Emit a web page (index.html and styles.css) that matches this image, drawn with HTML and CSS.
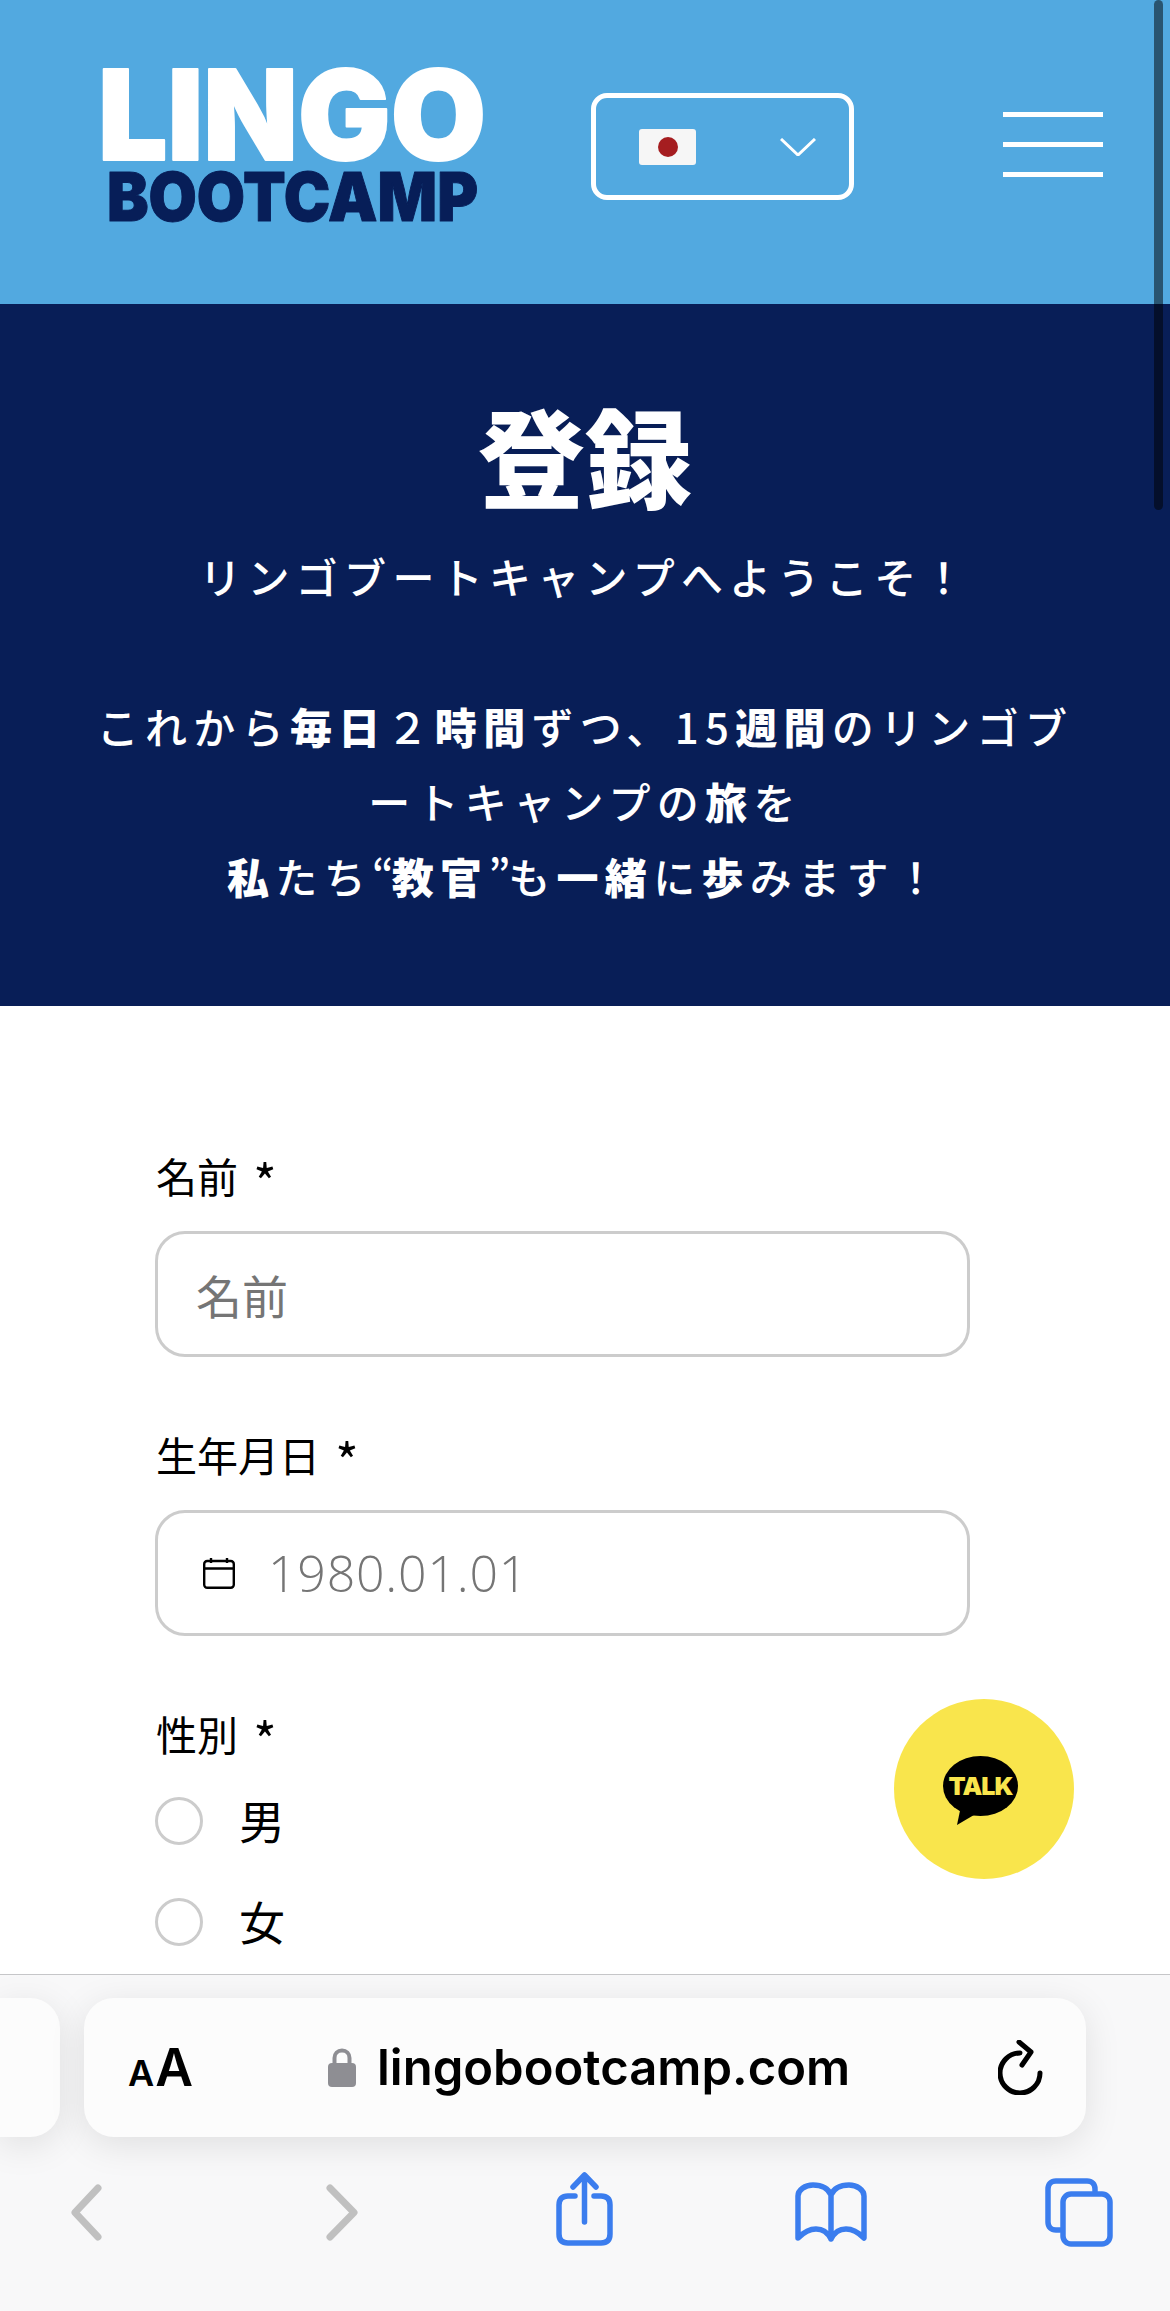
FILE: index.html
```html
<!DOCTYPE html>
<html lang="ja">
<head>
    <meta charset="UTF-8">
    <meta name="viewport" content="width=device-width, initial-scale=1.0">
    <title>登録 | Lingo Bootcamp</title>
    <link rel="stylesheet" href="styles.css">
</head>
<body>
    <header class="site-header">
        <svg class="logo" viewBox="0 0 384 160" role="img" aria-label="Lingo Bootcamp">
            <text class="logo-top" x="-4" y="94" textLength="388" lengthAdjust="spacingAndGlyphs">LINGO</text>
            <text class="logo-bottom" x="5" y="155" textLength="371" lengthAdjust="spacingAndGlyphs">BOOTCAMP</text>
        </svg>
        <div class="lang-select">
            <span class="flag"><span class="flag-dot"></span></span>
            <svg class="lang-chevron" viewBox="0 0 36 18"><polyline points="1,1 18,17 35,1"/></svg>
        </div>
        <div class="hamburger"><span></span><span></span><span></span></div>
    </header>

    <section class="hero">
        <h1>登録</h1>
        <p>リンゴブートキャンプへようこそ！<br><br>これから<b>毎日</b>２<b>時間</b>ずつ、15<b>週間</b>のリンゴブ<br>ートキャンプの<b>旅</b>を<br><b>私</b>たち<span class="quote">“</span><b>教官</b><span class="quote">”</span>も<b>一緒</b>に<b>歩</b>みます！</p>
    </section>

    <main class="form-area">
        <div class="field">
            <label class="field-label" for="name">名前 <span class="star">*</span></label>
            <div class="input-box"><input id="name" type="text" placeholder="名前"></div>
        </div>
        <div class="field">
            <label class="field-label" for="birth">生年月日 <span class="star">*</span></label>
            <div class="input-box date-box">
                <svg class="calendar" viewBox="0 0 32 32">
                    <rect x="1.2" y="4" width="29.6" height="26.8" rx="3"/>
                    <path d="M1.2 11.5H30.8M8 1V6M24 1V6"/>
                </svg>
                <input id="birth" type="text" placeholder="1980.01.01">
            </div>
        </div>
        <div class="field-label gender-label">性別 <span class="star">*</span></div>
        <div class="radio-list">
            <label class="radio-row"><span class="radio"></span><span class="radio-text">男</span></label>
            <label class="radio-row"><span class="radio"></span><span class="radio-text">女</span></label>
        </div>
    </main>

    <a class="kakao" href="#">
        <svg viewBox="0 0 75 69">
            <ellipse cx="37.5" cy="30" rx="37.5" ry="30"/>
            <polygon points="18,50 14,69 36,56"/>
            <text x="37.5" y="39" text-anchor="middle">TALK</text>
        </svg>
    </a>

    <div class="scrollbar"></div>

    <footer class="browser-bar">
        <div class="pill-row">
            <div class="pill-stub"></div>
            <div class="url-pill">
                <div class="text-size"><span class="a-small">A</span><span class="a-big">A</span></div>
                <svg class="lock" viewBox="0 0 28 39">
                    <path class="lock-hoop" d="M6.5 17V10C6.5 5.5 9.5 2.5 14 2.5S21.500 5.500 21.500 10V17"/>
                    <rect x="0" y="15" width="28" height="24" rx="4"/>
                </svg>
                <span class="url">lingobootcamp.com</span>
                <svg class="reload" viewBox="0 0 45 55">
                    <path d="M42 33A20 20 0 1 1 22 13"/>
                    <path d="M21 2L33 12L24 25"/>
                </svg>
            </div>
        </div>
        <nav class="toolbar">
            <svg class="tool tool-back" viewBox="0 0 31 57"><polyline points="27,4 4,28.500 27,53"/></svg>
            <svg class="tool tool-forward" viewBox="0 0 32 57"><polyline points="4,4 28,28.500 4,53"/></svg>
            <svg class="tool tool-share" viewBox="0 0 57 74">
                <path d="M19 24H12C6 24 3 27 3 33V62C3 68 6 71 12 71H45C51 71 54 68 54 62V33C54 27 51 24 45 24H38"/>
                <path d="M28.500 50V4M17 15L28.500 3L40 15"/>
            </svg>
            <svg class="tool tool-book" viewBox="0 0 72 61">
                <path d="M36 13C33 6 26 3 18 3C10 3 3 8 3 14V56C9 50 15 47 21 47C28 47 33 51 36 57C39 51 44 47 51 47C57 47 63 50 69 56V14C69 8 62 3 54 3C46 3 39 6 36 13V57"/>
            </svg>
            <svg class="tool tool-tabs" viewBox="0 0 68 69">
                <path d="M50 13V11C50 6 47 3 42 3H11C6 3 3 6 3 11V44C3 49 6 52 11 52H15"/>
                <rect x="18" y="16" width="47" height="50" rx="8"/>
            </svg>
        </nav>
    </footer>
</body>
</html>
```

FILE: styles.css
```css
* {
    box-sizing: border-box;
}

body {
    margin: 0;
    height: 2311px;
    overflow: hidden;
    position: relative;
    display: flex;
    flex-direction: column;
    background-color: white;
    font-family: 'Noto Sans CJK JP', 'Noto Sans', sans-serif;
    color: black;
}

/* site header */
.site-header {
    height: 304px;
    flex: none;
    background-color: #52a9e0;
    display: flex;
    align-items: flex-start;
    padding: 66px 67px 0 102px;
}

.logo {
    width: 384px;
    height: 160px;
    flex: none;
    overflow: visible;
}

.logo text {
    font-family: Inter, 'Liberation Sans', sans-serif;
    font-weight: 900;
    stroke-linejoin: round;
}

.logo-top {
    font-size: 125px;
    fill: white;
    stroke: white;
    stroke-width: 2px;
}

.logo-bottom {
    font-size: 68px;
    fill: #071e58;
    stroke: #071e58;
    stroke-width: 1px;
}

.lang-select {
    width: 263px;
    height: 107px;
    flex: none;
    margin: 27px 0 0 105px;
    border: 5px solid white;
    border-radius: 16px;
    display: flex;
    align-items: center;
    padding: 0 33px 0 43px;
    justify-content: space-between;
}

.flag {
    width: 57px;
    height: 36px;
    background-color: #f6f6f6;
    border-radius: 3px;
    display: flex;
    align-items: center;
    justify-content: center;
}

.flag-dot {
    width: 20px;
    height: 20px;
    border-radius: 50%;
    background-color: #a51d20;
}

.lang-chevron {
    width: 36px;
    height: 18px;
    fill: none;
    stroke: white;
    stroke-width: 3px;
}

.hamburger {
    width: 100px;
    margin: 46px 0 0 auto;
    display: flex;
    flex-direction: column;
    gap: 25px;
}

.hamburger span {
    height: 5px;
    background-color: white;
}

/* hero */
.hero {
    height: 702px;
    flex: none;
    background-color: #081e57;
    color: white;
    text-align: center;
    padding-top: 90px;
}

.hero h1 {
    margin: 0 0 24px;
    font-size: 107px;
    line-height: 120px;
    font-weight: 900;
}

.hero p {
    margin: 0;
    font-size: 42px;
    line-height: 75px;
    letter-spacing: 6.300px;
    font-weight: 500;
}

.hero b {
    font-weight: 900;
}

.hero .quote {
    letter-spacing: -2px;
}

/* form */
.form-area {
    flex: 1;
    padding: 139px 200px 0 155px;
    overflow: hidden;
}

.field {
    margin-bottom: 67px;
}

.field-label {
    display: block;
    font-size: 41px;
    line-height: 60px;
    margin-bottom: 26px;
    padding-left: 1px;
}

.star {
    margin-left: 6px;
    font-size: 50px;
    line-height: 0;
    vertical-align: -9px;
}

.input-box {
    height: 126px;
    border: 3px solid #cccccc;
    border-radius: 30px;
    display: flex;
    align-items: center;
    padding-left: 38px;
}

.input-box input {
    flex: 1;
    min-width: 0;
    border: none;
    outline: none;
    padding: 0;
    background: none;
    font-family: 'Noto Sans CJK JP', sans-serif;
    font-size: 46px;
}

.input-box input::placeholder {
    color: #757575;
    opacity: 1;
}

.date-box {
    padding-left: 45px;
}

.date-box input {
    margin-left: 33px;
    font-family: 'Open Sans', sans-serif;
    font-weight: 300;
    font-size: 50px;
    letter-spacing: 0.800px;
}

.calendar {
    width: 32px;
    height: 32px;
    flex: none;
    fill: none;
    stroke: black;
    stroke-width: 2.400px;
}

.gender-label {
    margin-bottom: 0;
}

.radio-list {
    margin-top: 34px;
    display: flex;
    flex-direction: column;
    gap: 53px;
}

.radio-row {
    display: flex;
    align-items: center;
    height: 48px;
    font-size: 46px;
    gap: 36px;
}

.radio-text {
    margin-bottom: 4px;
}

.radio {
    width: 48px;
    height: 48px;
    border: 3px solid #cccccc;
    border-radius: 50%;
}

/* floating things */
.kakao {
    position: absolute;
    left: 894px;
    top: 1699px;
    width: 180px;
    height: 180px;
    border-radius: 50%;
    background-color: #f9e54c;
    display: flex;
    align-items: center;
    justify-content: center;
}

.kakao svg {
    width: 75px;
    height: 69px;
    margin: 2px 0 0 -8px;
}

.kakao ellipse,
.kakao polygon {
    fill: black;
}

.kakao text {
    font-family: Inter, sans-serif;
    font-size: 25px;
    font-weight: 900;
    fill: #f9e54c;
    letter-spacing: -1px;
}

.scrollbar {
    position: absolute;
    right: 7px;
    top: 0;
    width: 9px;
    height: 510px;
    border-radius: 5px;
    background-color: rgba(0, 0, 0, 0.5);
}

/* safari bar */
.browser-bar {
    height: 337px;
    flex: none;
    background-color: #f8f8f9;
    border-top: 1px solid #c6c6c8;
    display: flex;
    flex-direction: column;
}

.pill-row {
    display: flex;
    gap: 24px;
    margin-top: 23px;
    height: 139px;
    flex: none;
}

.pill-stub,
.url-pill {
    background-color: #fcfcfc;
    box-shadow: 0 8px 36px rgba(0, 0, 0, 0.1);
}

.pill-stub {
    width: 60px;
    border-radius: 0 30px 30px 0;
}

.url-pill {
    width: 1002px;
    border-radius: 30px;
    display: flex;
    align-items: center;
    padding: 0 43px 0 44px;
}

.text-size {
    width: 200px;
    display: flex;
    align-items: baseline;
    font-family: Inter, sans-serif;
    font-weight: 600;
    line-height: 1;
    flex: none;
}

.a-small {
    font-size: 36px;
    margin-right: 1px;
}

.a-big {
    font-size: 52px;
}

.lock {
    width: 28px;
    height: 39px;
    flex: none;
    fill: #8e8e93;
}

.lock-hoop {
    fill: none;
    stroke: #8e8e93;
    stroke-width: 4px;
}

.url {
    margin-left: 21px;
    font-family: Inter, sans-serif;
    font-weight: 600;
    font-size: 49px;
    line-height: 1;
}

.reload {
    margin-left: auto;
    width: 45px;
    height: 55px;
    flex: none;
    fill: none;
    stroke: black;
    stroke-width: 5px;
    stroke-linecap: round;
    stroke-linejoin: round;
}

.toolbar {
    display: flex;
    align-items: center;
    height: 150px;
    padding-left: 71px;
}

.tool {
    flex: none;
    fill: none;
    stroke: #3b7dee;
    stroke-width: 5.500px;
    stroke-linecap: round;
    stroke-linejoin: round;
}

.tool-back,
.tool-forward {
    height: 57px;
    stroke: #c0c0c0;
    stroke-width: 7px;
}

.tool-back {
    width: 31px;
}

.tool-forward {
    width: 32px;
    margin-left: 224px;
}

.tool-share {
    width: 57px;
    height: 74px;
    margin: -6px 0 0 198px;
}

.tool-book {
    width: 72px;
    height: 61px;
    margin-left: 182px;
}

.tool-tabs {
    width: 68px;
    height: 69px;
    margin-left: 178px;
}
```
